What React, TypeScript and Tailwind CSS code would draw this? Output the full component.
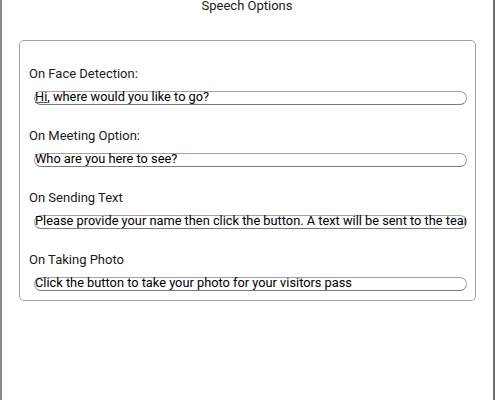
import React from "react";

const options = [
  { label: "On Face Detection:", text: "Hi, where would you like to go?", flagged: "Hi" },
  { label: "On Meeting Option:", text: "Who are you here to see?" },
  {
    label: "On Sending Text",
    text: "Please provide your name then click the button. A text will be sent to the team member you are here to see.",
  },
  { label: "On Taking Photo", text: "Click the button to take your photo for your visitors pass" },
];

function SpeechField({ text, flagged }: { text: string; flagged?: string }) {
  const rest = flagged ? text.slice(flagged.length) : text;
  return (
    <div className="ml-[5px] mr-[8px] h-[14px] rounded-full border border-[#a4a4a4] border-b-[#7a7a7a] bg-white overflow-x-clip overflow-y-visible whitespace-nowrap text-[12.8px] leading-[10px] text-black">
      {flagged && <span className="underline decoration-[#555] underline-offset-[1px]">{flagged}</span>}
      {rest}
    </div>
  );
}

export default function App() {
  return (
    <div
      className="w-[495px] h-[400px] bg-white border-l-2 border-r-2 border-l-[#8a8a8a] border-r-[#6e6e6e] text-[#1a1a1a]"
      style={{ fontFamily: "Roboto, 'Noto Sans', sans-serif" }}
    >
      <div className="text-center text-[13px] leading-[11px] pr-[1px]">Speech Options</div>

      <div className="mt-[29px] ml-[17px] w-[457px] rounded-[5px] border border-[#a0a0a0] pt-[25px] pb-[9px] pl-[9px] flex flex-col gap-[23px]">
        {options.map((o) => (
          <div key={o.label} className="flex flex-col gap-[9px]">
            <div className="text-[13px] leading-[16px]">{o.label}</div>
            <SpeechField text={o.text} flagged={o.flagged} />
          </div>
        ))}
      </div>
    </div>
  );
}
